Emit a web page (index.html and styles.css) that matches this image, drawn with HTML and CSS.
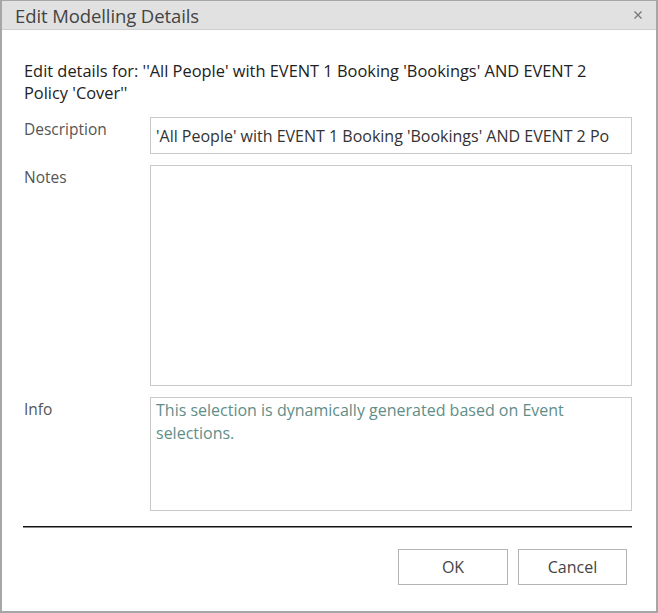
FILE: index.html
```html
<!DOCTYPE html>
<html lang="en">
<head>
<meta charset="utf-8">
<title>Edit Modelling Details</title>
<link rel="stylesheet" href="styles.css">
</head>
<body>
<div class="dialog">
  <div class="titlebar">
    <span class="title">Edit Modelling Details</span>
    <button class="close" aria-label="Close">
      <svg width="8" height="8" viewBox="0 0 8 8"><path d="M0.5 0.5 L7.5 7.5 M7.5 0.5 L0.5 7.5" stroke="#7a7a7a" stroke-width="1.4" fill="none"/></svg>
    </button>
  </div>
  <div class="body">
    <p class="intro">Edit details for: ''All People' with EVENT 1 Booking 'Bookings' AND EVENT 2 Policy 'Cover''</p>
    <div class="form">
      <label class="label" for="desc">Description</label>
      <input class="field" id="desc" type="text" value="'All People' with EVENT 1 Booking 'Bookings' AND EVENT 2 Po">
      <label class="label" for="notes">Notes</label>
      <textarea class="field notes" id="notes"></textarea>
      <span class="label">Info</span>
      <div class="field info">This selection is dynamically generated based on Event selections.</div>
    </div>
    <hr class="sep">
    <div class="actions">
      <button class="btn">OK</button>
      <button class="btn">Cancel</button>
    </div>
  </div>
</div>
</body>
</html>
```

FILE: styles.css
```css
* { box-sizing: border-box; }

html, body {
  margin: 0;
  background: #ffffff;
}

body {
  font-family: "Open Sans", "Noto Sans", sans-serif;
  font-size: 16px;
  color: #222;
}

.dialog {
  width: 658px;
  height: 613px;
  border: 1px solid #a6a6a6;
  border-left-width: 2px;
  border-bottom-width: 2px;
  border-right-width: 2px;
  display: flex;
  flex-direction: column;
  background: #fff;
}

.titlebar {
  height: 29px;
  background: #e1e1e1;
  border-bottom: 1px solid #cfcfcf;
  display: flex;
  align-items: center;
  justify-content: space-between;
  padding: 0 11px 0 13px;
}

.title {
  font-size: 18.5px;
  color: #444;
  letter-spacing: -0.1px;
}

.close {
  border: 0;
  background: transparent;
  padding: 0;
  width: 14px;
  height: 14px;
  display: flex;
  align-items: center;
  justify-content: center;
}

.body {
  padding: 30px 24px 0 20px;
  display: flex;
  flex-direction: column;
}

.intro {
  margin: 0 0 13px 0;
  padding-left: 2px;
  font-size: 16.4px;
  line-height: 22px;
  color: #222;
}

.form {
  display: grid;
  grid-template-columns: 126px 1fr;
  row-gap: 11px;
  padding-left: 2px;
}

.label {
  color: #555;
  font-size: 15.5px;
  line-height: 22px;
  padding-top: 1px;
}

.field {
  font-family: inherit;
  font-size: 16px;
  border: 1px solid #c9c9c9;
  background: #fff;
  margin: 0;
  outline: none;
}

input.field {
  height: 37px;
  padding: 0 5px;
  color: #333;
}

.notes {
  height: 221px;
  resize: none;
  display: block;
}

.info {
  height: 114px;
  padding: 1px 5px;
  line-height: 23px;
  color: #5f8e88;
}

.sep {
  margin: 15px 0 0 1px;
  border: 0;
  border-top: 1px solid #111;
  border-bottom: 1px solid #8a8a8a;
  height: 0;
}

.actions {
  display: flex;
  justify-content: flex-end;
  gap: 10px;
  padding-top: 21px;
  padding-right: 5px;
}

.btn {
  font-family: inherit;
  font-size: 16px;
  color: #444;
  width: 110px;
  height: 36px;
  background: #fff;
  border: 1px solid #b4b4b4;
  padding: 0;
}

.btn + .btn {
  width: 109px;
}
```
